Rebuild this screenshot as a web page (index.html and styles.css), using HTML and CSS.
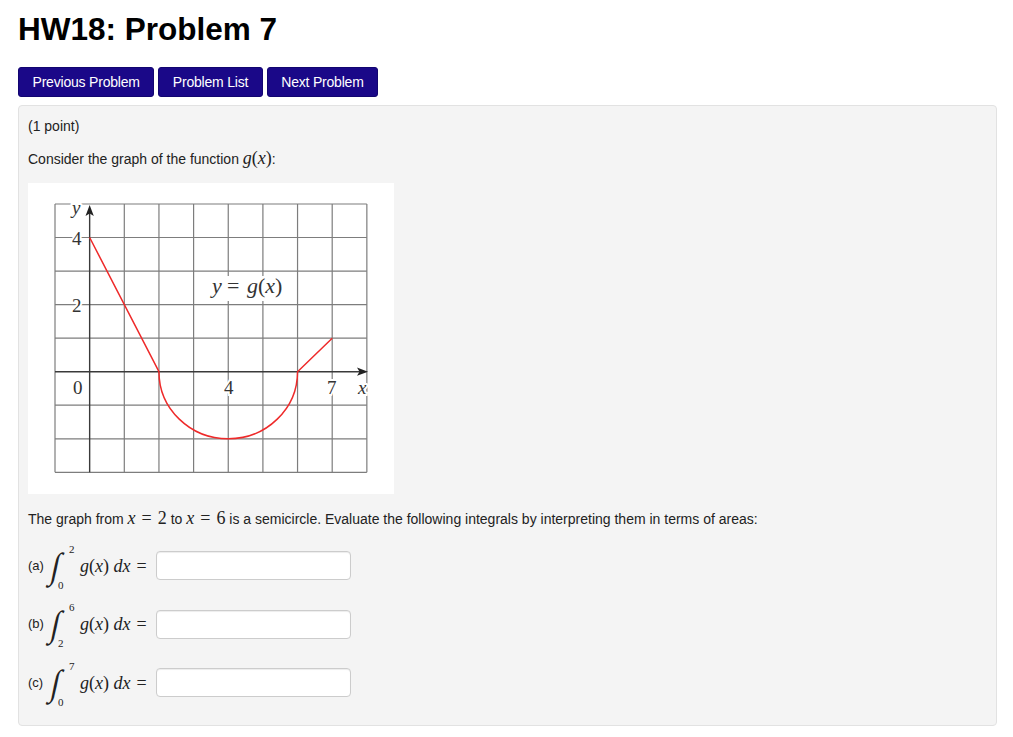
FILE: index.html
```html
<!DOCTYPE html>
<html>
<head>
<meta charset="utf-8">
<link rel="stylesheet" href="styles.css">
</head>
<body>
<div class="page">
  <h1 class="title">HW18: Problem 7</h1>
  <div class="nav">
    <a class="btn">Previous Problem</a>
    <a class="btn">Problem List</a>
    <a class="btn">Next Problem</a>
  </div>
  <div class="well">
    <p class="line">(1 point)</p>
    <p class="line">Consider the graph of the function <span class="m"><i>g</i>(<i>x</i>)</span>:</p>
    <div class="figure">
      <svg width="366" height="311" viewBox="0 0 366 311" xmlns="http://www.w3.org/2000/svg">
        <g stroke="#7d7d7d" stroke-width="1.2" fill="none">
          <line x1="27" y1="21" x2="27" y2="289.3"/>
          <line x1="96.3" y1="21" x2="96.3" y2="289.3"/>
          <line x1="130.95" y1="21" x2="130.95" y2="289.3"/>
          <line x1="165.6" y1="21" x2="165.6" y2="289.3"/>
          <line x1="200.25" y1="21" x2="200.25" y2="289.3"/>
          <line x1="234.9" y1="21" x2="234.9" y2="289.3"/>
          <line x1="269.55" y1="21" x2="269.55" y2="289.3"/>
          <line x1="304.2" y1="21" x2="304.2" y2="289.3"/>
          <line x1="338.85" y1="21" x2="338.85" y2="289.3"/>
          <line x1="27" y1="21" x2="338.85" y2="21"/>
          <line x1="27" y1="54.5" x2="338.85" y2="54.5"/>
          <line x1="27" y1="88.1" x2="338.85" y2="88.1"/>
          <line x1="27" y1="121.6" x2="338.85" y2="121.6"/>
          <line x1="27" y1="155.2" x2="338.85" y2="155.2"/>
          <line x1="27" y1="222.2" x2="338.85" y2="222.2"/>
          <line x1="27" y1="255.8" x2="338.85" y2="255.8"/>
          <line x1="27" y1="289.3" x2="338.85" y2="289.3"/>
        </g>
        <g stroke="#3a3a3a" stroke-width="1.4">
          <line x1="61.65" y1="30" x2="61.65" y2="289.3"/>
          <line x1="27" y1="188.7" x2="332" y2="188.7"/>
        </g>
        <polygon points="61.65,22 57.5,33 61.65,30.5 65.8,33" fill="#222"/>
        <polygon points="340,188.7 329,184.6 331.5,188.7 329,192.8" fill="#222"/>
        <path d="M61.65 54.5 L130.95 188.7 A69.3 67.1 0 0 0 269.55 188.7 L304.2 155.2" stroke="#ee2a2a" stroke-width="1.5" fill="none" stroke-linejoin="round"/>
        <g font-family="'Liberation Serif', 'Times New Roman', serif" font-size="19" fill="#333" stroke="#fff" stroke-width="4" paint-order="stroke">
          <text x="44" y="62">4</text>
          <text x="44" y="129">2</text>
          <text x="45" y="211">0</text>
          <text x="196" y="211">4</text>
          <text x="299" y="211">7</text>
          <text x="330" y="211" font-style="italic">x</text>
          <text x="44" y="31" font-style="italic">y</text>
        </g>
        <rect x="182" y="93" width="80" height="25" fill="#fff"/>
        <g font-family="'Liberation Serif', 'Times New Roman', serif" font-size="22" fill="#333">
          <text x="184" y="110" font-style="italic">y</text>
          <text x="199" y="110">=</text>
          <text x="219" y="110"><tspan font-style="italic">g</tspan>(<tspan font-style="italic">x</tspan>)</text>
        </g>
      </svg>
    </div>
    <p class="line sentence">The graph from <span class="m"><i>x</i><span class="eq">=</span>2</span> to <span class="m"><i>x</i><span class="eq">=</span>6</span> is a semicircle. Evaluate the following integrals by interpreting them in terms of areas:</p>
    <div class="rows">
      <div class="row">
        <span class="lbl">(a)</span>
        <span class="integral"><span class="int">∫</span><span class="up">2</span><span class="lo">0</span></span>
        <span class="m expr"><i>g</i>(<i>x</i>) <i>dx</i><span class="eq">=</span></span>
        <input class="answer" type="text">
      </div>
      <div class="row">
        <span class="lbl">(b)</span>
        <span class="integral"><span class="int">∫</span><span class="up">6</span><span class="lo">2</span></span>
        <span class="m expr"><i>g</i>(<i>x</i>) <i>dx</i><span class="eq">=</span></span>
        <input class="answer" type="text">
      </div>
      <div class="row">
        <span class="lbl">(c)</span>
        <span class="integral"><span class="int">∫</span><span class="up">7</span><span class="lo">0</span></span>
        <span class="m expr"><i>g</i>(<i>x</i>) <i>dx</i><span class="eq">=</span></span>
        <input class="answer" type="text">
      </div>
    </div>
  </div>
</div>
</body>
</html>
```

FILE: styles.css
```css
* { box-sizing: border-box; }
html, body { margin: 0; padding: 0; background: #fff; }
body {
  font-family: "Liberation Sans", Arial, Helvetica, sans-serif;
  font-size: 14px;
  line-height: 20px;
  color: #222;
}
.page {
  padding: 0 16px 0 18px;
}
.title {
  margin: 12px 0 0 0;
  font-size: 31.5px;
  line-height: 34.65px;
  font-weight: bold;
  color: #000;
}
.nav {
  display: flex;
  gap: 4px;
  margin-top: 20px;
}
.btn {
  display: block;
  height: 30px;
  padding: 5px 13.5px;
  background: #1a0888;
  border: 1px solid #120570;
  border-radius: 3px;
  color: #fff;
  font-size: 14px;
  line-height: 18px;
  letter-spacing: -0.2px;
  cursor: pointer;
}
.well {
  margin-top: 8px;
  width: 979px;
  min-height: 621px;
  background: #f4f4f4;
  border: 1px solid #e2e2e2;
  border-radius: 4px;
  padding: 10px 9px 20px 9px;
}
.line {
  margin: 0;
}
.line + .line {
  margin-top: 13px;
}
.m {
  font-family: "Liberation Serif", "Times New Roman", serif;
  font-size: 18px;
  line-height: 14px;
}
.m i { font-style: italic; }
.eq { margin: 0 6px; }
.figure {
  margin-top: 14px;
  width: 366px;
  height: 311px;
  background: #fff;
}
.figure svg { display: block; }
.sentence {
  margin-top: 15px;
}
.rows {
  display: flex;
  flex-direction: column;
  gap: 14.5px;
  margin-top: 15px;
}
.row {
  display: flex;
  align-items: center;
  height: 44px;
}
.lbl {
  font-size: 13px;
  width: 22px;
}
.integral {
  display: grid;
  grid-template-columns: 30px;
  grid-template-rows: 44px;
  width: 30px;
  height: 44px;
}
.integral > span {
  grid-area: 1 / 1;
  justify-self: start;
}
.int {
  align-self: center;
  margin-left: 1px;
  margin-top: 0;
  font-family: "Liberation Serif", "Times New Roman", serif;
  font-size: 36px;
  line-height: 40px;
  font-weight: normal;
  color: #222;
  transform: skewX(-12deg) scaleX(0.85);
}
.up, .lo {
  font-family: "Liberation Serif", "Times New Roman", serif;
  font-size: 11px;
  line-height: 12px;
}
.up {
  align-self: start;
  margin-left: 19px;
  margin-top: -1px;
}
.lo {
  align-self: end;
  margin-left: 8px;
  margin-bottom: -3px;
}
.expr {
  width: 76px;
  white-space: nowrap;
  line-height: 20px;
}
.expr .eq { margin-right: 0; }
.answer {
  width: 195px;
  height: 29px;
  border: 1px solid #ccc;
  border-radius: 4px;
  background: #fff;
  box-shadow: inset 0 1px 1px rgba(0,0,0,0.075);
  font-size: 14px;
  padding: 4px 6px;
}
```
